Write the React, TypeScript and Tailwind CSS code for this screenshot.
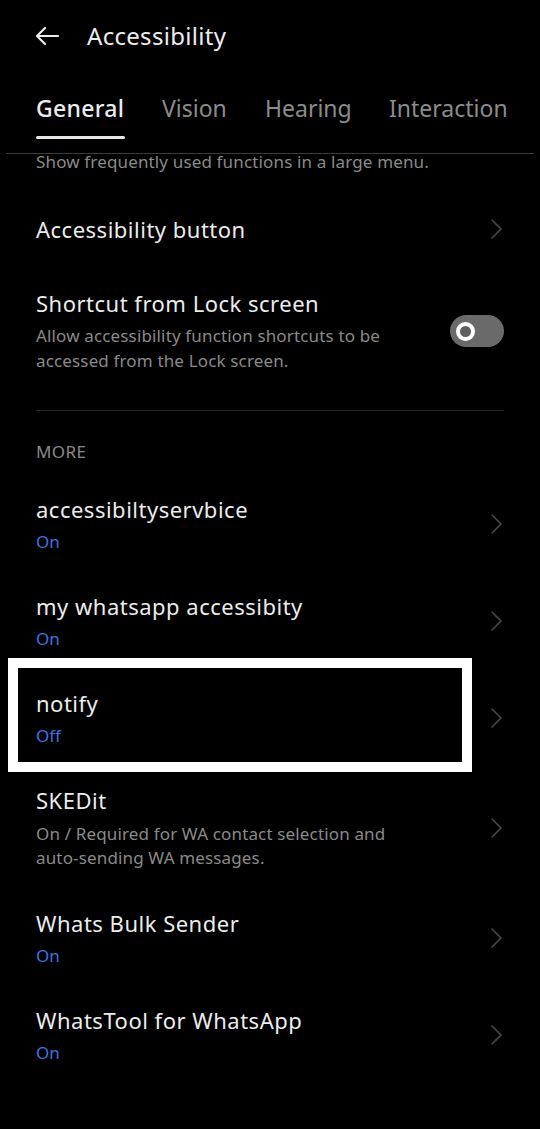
import React from "react";

const font = { fontFamily: "'Noto Sans', Roboto, sans-serif" };

const Chevron = () => (
  <svg width="14" height="22" viewBox="0 0 14 22" fill="none" className="shrink-0">
    <path d="M2 2 L11 11 L2 20" stroke="#4a4a4a" strokeWidth="1.6" strokeLinecap="round" strokeLinejoin="round" />
  </svg>
);

const Item = ({ title, status, lines }: { title: string; status?: string; lines?: string[] }) => (
  <div className="flex items-center justify-between pl-[36px] pr-[36px] mb-[39px]">
    <div className="flex flex-col">
      <div className="text-[22px] leading-[28px] tracking-[0.5px] text-[#ececec]">{title}</div>
      {status && (
        <div className="mt-[8px] text-[17px] leading-[22px] text-[#3f72e0]">{status}</div>
      )}
      {lines && (
        <div className="mt-[8px] text-[17px] leading-[24px] tracking-[0.15px] text-[#8a8a8a]">
          {lines.map((l) => (
            <div key={l}>{l}</div>
          ))}
        </div>
      )}
    </div>
    <Chevron />
  </div>
);

export default function App() {
  return (
    <div className="relative w-[540px] h-[1129px] bg-black overflow-hidden" style={font}>
      {/* header */}
      <div className="h-[72px] flex items-center pl-[34px]">
        <svg width="26" height="20" viewBox="0 0 26 20" fill="none">
          <path d="M24 10 H3 M11 2 L3 10 L11 18" stroke="#ececec" strokeWidth="2.2" strokeLinecap="round" strokeLinejoin="round" />
        </svg>
        <div className="ml-[27px] text-[24px] tracking-[0.3px] text-[#ececec] leading-[32px]">Accessibility</div>
      </div>

      {/* tabs */}
      <div className="mt-[20px] flex pl-[36px] text-[23px] leading-[32px] whitespace-nowrap">
        <div className="flex flex-col w-[126px]">
          <span className="text-[#ececec] font-medium tracking-[0.3px]">General</span>
          <div className="mt-[12px] h-[3px] w-[89px] bg-[#e6e6e6] rounded-full" />
        </div>
        <span className="w-[103px] text-[#8c8c8c]">Vision</span>
        <span className="w-[124px] text-[#8c8c8c]">Hearing</span>
        <span className="text-[#8c8c8c]">Interaction</span>
      </div>
      <div className="mt-[14px] mx-[6px] h-px bg-[#3a3a3a]" />

      <div className="pl-[36px] text-[17px] leading-[16px] tracking-[0.15px] text-[#8a8a8a]">
        Show frequently used functions in a large menu.
      </div>

      {/* Accessibility button */}
      <div className="mt-[45px] flex items-center justify-between pl-[36px] pr-[36px]">
        <div className="text-[22px] leading-[28px] tracking-[0.5px] text-[#ececec]">Accessibility button</div>
        <Chevron />
      </div>

      {/* Shortcut from lock screen */}
      <div className="mt-[46px] flex items-center justify-between pl-[36px] pr-[36px]">
        <div className="flex flex-col">
          <div className="text-[22px] leading-[28px] tracking-[0.5px] text-[#ececec]">Shortcut from Lock screen</div>
          <div className="mt-[6px] text-[17px] leading-[25px] tracking-[0.15px] text-[#8a8a8a]">
            <div>Allow accessibility function shortcuts to be</div>
            <div>accessed from the Lock screen.</div>
          </div>
        </div>
        <div className="w-[54px] h-[32px] rounded-full bg-[#6a6a6a] flex items-center pl-[6px] shrink-0">
          <div className="w-[19px] h-[19px] rounded-full border-[4px] border-white bg-[#5e5e5e]" />
        </div>
      </div>

      <div className="mt-[37px] mx-[36px] h-px bg-[#262626]" />

      <div className="mt-[31px] pl-[36px] text-[17px] leading-[20px] tracking-[0.4px] text-[#8a8a8a]">MORE</div>

      <div className="mt-[33px]">
        <Item title="accessibiltyservbice" status="On" />
        <Item title="my whatsapp accessibity" status="On" />
        <Item title="notify" status="Off" />
        <Item title="SKEDit" lines={["On / Required for WA contact selection and", "auto-sending WA messages."]} />
        <Item title="Whats Bulk Sender" status="On" />
        <Item title="WhatsTool for WhatsApp" status="On" />
      </div>

      {/* highlight box drawn over the notify row */}
      <div className="absolute left-[8px] top-[658px] w-[464px] h-[114px] border-[10px] border-white" />
    </div>
  );
}
